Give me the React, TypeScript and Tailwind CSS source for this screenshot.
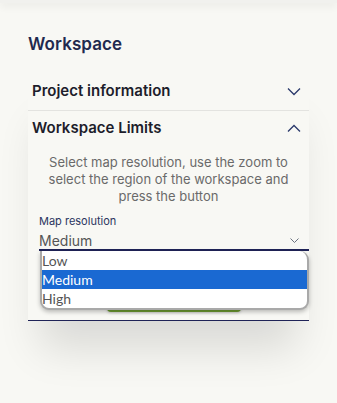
import React from 'react'

const Chevron: React.FC<{ up?: boolean }> = ({ up }) => (
  <svg width="14" height="8" viewBox="0 0 14 8" fill="none">
    <path
      d={up ? 'M1 7.5L7 1.5L13 7.5' : 'M1 0.5L7 6.5L13 0.5'}
      stroke="#2b3a6b"
      strokeWidth="1.3"
    />
  </svg>
)

const App: React.FC = () => {
  const options = ['Low', 'Medium', 'High']

  return (
    <div className="w-[337px] h-[403px] bg-[#f8f8f4] overflow-hidden relative" style={{ fontFamily: 'Inter, "Noto Sans", sans-serif' }}>
      {/* header shadow */}
      <div className="h-[3px] bg-[#f1f1ee] shadow-[0_2px_8px_rgba(0,0,0,0.12)]" />

      <div className="px-[28px] pt-[31px]">
        <h1 className="text-[17px] font-semibold text-[#1f2a4f] leading-[20px] tracking-[0.1px]">Workspace</h1>

        <div className="mt-[19px] shadow-[0_40px_40px_-12px_rgba(0,0,0,0.12)]">
          {/* Project information */}
          <div className="flex items-center justify-between pl-[4px] pr-[8px] h-[38px] border-b border-[#e3e3e0]">
            <span className="text-[15px] font-semibold text-[#1d1d2b]">Project information</span>
            <Chevron />
          </div>

          {/* Workspace Limits */}
          <div className="flex items-center justify-between pl-[4px] pr-[8px] h-[34px]">
            <span className="text-[15px] font-semibold text-[#1d1d2b]">Workspace Limits</span>
            <Chevron up />
          </div>

          <div className="border-b border-[#1f2357] pb-[8px]">
            <p className="text-center text-[13px] leading-[17px] text-[#6a6a6a] px-[4px] pt-[9px]">
              Select map resolution, use the zoom to select the region of the workspace and press the button
            </p>

            <div className="mt-[10px] ml-[11px] relative">
              <div className="text-[11px] leading-[13px] text-[#2b3560]">Map resolution</div>
              <div className="mt-[4px] flex items-center justify-between h-[19px] border-b-2 border-[#1f2357] pr-[10px]">
                <span className="text-[14px] leading-[17px] text-[#555]">Medium</span>
                <svg width="9" height="5" viewBox="0 0 9 5" fill="none">
                  <path d="M0.5 0.5L4.5 4.5L8.5 0.5" stroke="#6b7280" strokeWidth="1" />
                </svg>
              </div>

              <div className="flex justify-center mt-[31px]">
                <div className="w-[134px] h-[30px] bg-[#6c9a2f] rounded-[4px] shadow-[0_1px_3px_rgba(0,0,0,0.2)]" />
              </div>

              {/* open select list */}
              <div
                className="absolute left-[1px] right-0 top-[36px] bg-white border-2 border-[#a9a9a9] border-t-0 rounded-b-[9px] rounded-tr-[9px] shadow-[0_2px_4px_rgba(0,0,0,0.25)] overflow-hidden"
                style={{ fontFamily: 'Lato, "Liberation Sans", sans-serif' }}
              >
                {options.map((o) => (
                  <div
                    key={o}
                    className={`h-[19px] leading-[19px] text-[14px] ${o === 'Medium' ? 'bg-[#1a69d2] text-white' : 'text-[#555]'}`}
                  >
                    {o}
                  </div>
                ))}
              </div>
            </div>
          </div>
        </div>
      </div>
    </div>
  )
}

export default App
